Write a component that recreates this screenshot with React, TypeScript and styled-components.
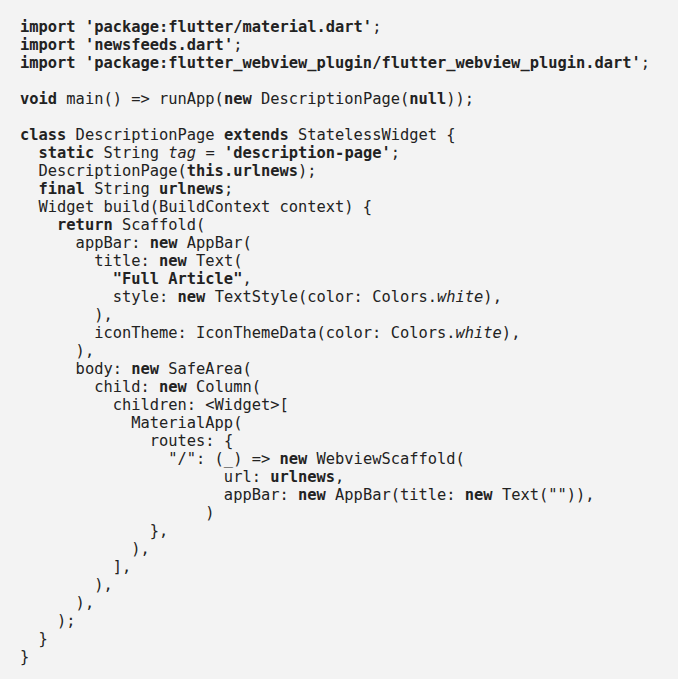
import React from 'react';
import styled, { createGlobalStyle } from 'styled-components';

const Global = createGlobalStyle`
  html, body {
    margin: 0;
    padding: 0;
    background: #f3f3f3;
  }
`;

const Page = styled.div`
  background: #f3f3f3;
  min-height: 679px;
  box-sizing: border-box;
  padding: 18px 20px;
`;

const Code = styled.pre`
  margin: 0;
  font-family: "DejaVu Sans Mono", "Liberation Mono", monospace;
  font-size: 15.4px;
  line-height: 18px;
  color: #222222;
  white-space: pre;
`;

const K = styled.b`
  font-weight: bold;
`;

const I = styled.i`
  font-style: italic;
`;

export default function App() {
  return (
    <>
      <Global />
      <Page>
        <Code>
          <K>import</K> <K>'package:flutter/material.dart'</K>;{'\n'}
          <K>import</K> <K>'newsfeeds.dart'</K>;{'\n'}
          <K>import</K> <K>'package:flutter_webview_plugin/flutter_webview_plugin.dart'</K>;{'\n'}
          {'\n'}
          <K>void</K> main() =&gt; runApp(<K>new</K> DescriptionPage(<K>null</K>));{'\n'}
          {'\n'}
          <K>class</K> DescriptionPage <K>extends</K> StatelessWidget {'{'}{'\n'}
          {'  '}<K>static</K> String <I>tag</I> = <K>'description-page'</K>;{'\n'}
          {'  '}DescriptionPage(<K>this.urlnews</K>);{'\n'}
          {'  '}<K>final</K> String <K>urlnews</K>;{'\n'}
          {'  '}Widget build(BuildContext context) {'{'}{'\n'}
          {'    '}<K>return</K> Scaffold({'\n'}
          {'      '}appBar: <K>new</K> AppBar({'\n'}
          {'        '}title: <K>new</K> Text({'\n'}
          {'          '}<K>"Full Article"</K>,{'\n'}
          {'          '}style: <K>new</K> TextStyle(color: Colors.<I>white</I>),{'\n'}
          {'        '}),{'\n'}
          {'        '}iconTheme: IconThemeData(color: Colors.<I>white</I>),{'\n'}
          {'      '}),{'\n'}
          {'      '}body: <K>new</K> SafeArea({'\n'}
          {'        '}child: <K>new</K> Column({'\n'}
          {'          '}children: &lt;Widget&gt;[{'\n'}
          {'            '}MaterialApp({'\n'}
          {'              '}routes: {'{'}{'\n'}
          {'                '}"/": (_) =&gt; <K>new</K> WebviewScaffold({'\n'}
          {'                      '}url: <K>urlnews</K>,{'\n'}
          {'                      '}appBar: <K>new</K> AppBar(title: <K>new</K> Text("")),{'\n'}
          {'                    '}){'\n'}
          {'              '}{'}'},{'\n'}
          {'            '}),{'\n'}
          {'          '}],{'\n'}
          {'        '}),{'\n'}
          {'      '}),{'\n'}
          {'    '});{'\n'}
          {'  '}{'}'}{'\n'}
          {'}'}
        </Code>
      </Page>
    </>
  );
}
